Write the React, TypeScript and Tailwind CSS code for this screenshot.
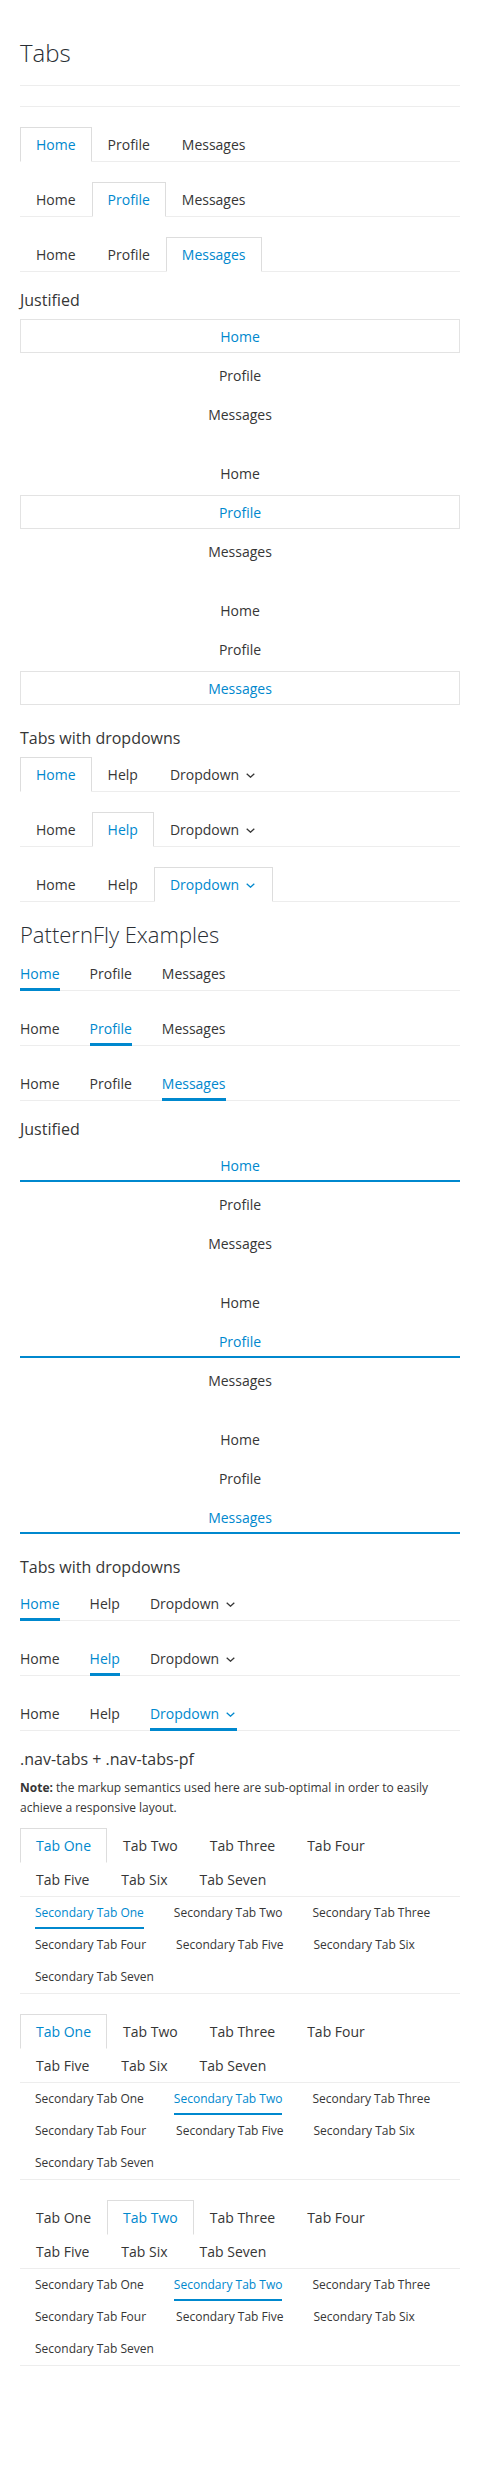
import React from 'react';

type TabItem = { label: string; dropdown?: boolean };

const basic: TabItem[] = [{ label: 'Home' }, { label: 'Profile' }, { label: 'Messages' }];
const withDropdown: TabItem[] = [{ label: 'Home' }, { label: 'Help' }, { label: 'Dropdown', dropdown: true }];
const primary = ['Tab One', 'Tab Two', 'Tab Three', 'Tab Four', 'Tab Five', 'Tab Six', 'Tab Seven'];
const secondary = [
  'Secondary Tab One',
  'Secondary Tab Two',
  'Secondary Tab Three',
  'Secondary Tab Four',
  'Secondary Tab Five',
  'Secondary Tab Six',
  'Secondary Tab Seven',
];

function Caret() {
  return (
    <svg width="11" height="5" viewBox="0 0 11 5" className="ml-[7px] mt-[1px]" fill="none">
      <polyline points="0.7,0.7 4.5,4.2 8.3,0.7" stroke="currentColor" strokeWidth="1.3" />
    </svg>
  );
}

function Label({ item }: { item: TabItem }) {
  return (
    <>
      {item.label}
      {item.dropdown && <Caret />}
    </>
  );
}

// bootstrap style tabs with a boxed active tab
function NavTabs({ items, active }: { items: TabItem[]; active: number }) {
  return (
    <ul className="flex border-b border-[#ededed] mb-[20px]">
      {items.map((item, i) => (
        <li key={item.label} className="-mb-px">
          <a
            className={
              'h-[35px] flex items-center px-[15px] border text-[14px] ' +
              (i === active
                ? 'border-[#dddddd] border-b-white bg-white text-[#0088ce]'
                : 'border-transparent text-[#363636]')
            }
          >
            <Label item={item} />
          </a>
        </li>
      ))}
    </ul>
  );
}

function NavTabsJustified({ items, active }: { items: TabItem[]; active: number }) {
  return (
    <ul className="flex flex-col mb-[20px]">
      {items.map((item, i) => (
        <li key={item.label}>
          <a
            className={
              'h-[34px] mb-[5px] flex items-center justify-center border text-[14px] ' +
              (i === active ? 'border-[#e3e3e3] text-[#0088ce]' : 'border-transparent text-[#363636]')
            }
          >
            {item.label}
          </a>
        </li>
      ))}
    </ul>
  );
}

// patternfly underline tabs
function PfTabs({ items, active }: { items: TabItem[]; active: number }) {
  return (
    <ul className="flex gap-[30px] border-b border-[#ededed] mb-[20px]">
      {items.map((item, i) => (
        <li key={item.label} className="-mb-px">
          <a
            className={
              'h-[35px] flex items-center text-[14px] ' +
              (i === active ? 'text-[#0088ce] shadow-[inset_0_-3px_0_#0088ce]' : 'text-[#363636]')
            }
          >
            <Label item={item} />
          </a>
        </li>
      ))}
    </ul>
  );
}

function PfTabsJustified({ items, active }: { items: TabItem[]; active: number }) {
  return (
    <ul className="flex flex-col mb-[20px]">
      {items.map((item, i) => (
        <li key={item.label}>
          <a
            className={
              'h-[34px] mb-[5px] flex items-center justify-center text-[14px] ' +
              (i === active ? 'text-[#0088ce] shadow-[inset_0_-2px_0_#0088ce]' : 'text-[#363636]')
            }
          >
            {item.label}
          </a>
        </li>
      ))}
    </ul>
  );
}

function TwoLevelTabs({ activePrimary, activeSecondary }: { activePrimary: number; activeSecondary: number }) {
  return (
    <div className="mb-[20px]">
      <ul className="flex flex-wrap border-b border-[#ededed]">
        {primary.map((label, i) => (
          <li key={label} className="-mb-px">
            <a
              className={
                'h-[35px] flex items-center px-[15px] border text-[14px] ' +
                (i === activePrimary
                  ? 'border-[#dddddd] border-b-white bg-white text-[#0088ce]'
                  : 'border-transparent text-[#363636]')
              }
            >
              {label}
            </a>
          </li>
        ))}
      </ul>
      <ul className="flex flex-wrap gap-x-[30px] px-[15px] border-b border-[#ededed]">
        {secondary.map((label, i) => (
          <li key={label}>
            <a
              className={
                'h-[32px] flex items-center text-[12px] ' +
                (i === activeSecondary ? 'text-[#0088ce] shadow-[inset_0_-2px_0_#0088ce]' : 'text-[#363636]')
              }
            >
              {label}
            </a>
          </li>
        ))}
      </ul>
    </div>
  );
}

function H3({ children }: { children: React.ReactNode }) {
  return <h3 className="text-[16px] leading-[17px] mb-[10px] text-[#363636]">{children}</h3>;
}

export default function App() {
  return (
    <div className="bg-white min-h-[2466px] px-[20px] text-[#363636] font-['Open_Sans','Liberation_Sans',sans-serif]">
      <div className="pt-[40px] pb-[19px] border-b border-[#ededed]">
        <h1 className="text-[24px] leading-[26px] font-light text-[#292e34]">Tabs</h1>
      </div>
      <hr className="mt-[20px] mb-[20px] border-[#ededed]" />

      <NavTabs items={basic} active={0} />
      <NavTabs items={basic} active={1} />
      <NavTabs items={basic} active={2} />

      <H3>Justified</H3>
      <NavTabsJustified items={basic} active={0} />
      <NavTabsJustified items={basic} active={1} />
      <NavTabsJustified items={basic} active={2} />

      <H3>Tabs with dropdowns</H3>
      <NavTabs items={withDropdown} active={0} />
      <NavTabs items={withDropdown} active={1} />
      <NavTabs items={withDropdown} active={2} />

      <h2 className="text-[22px] leading-[24px] font-light mb-[10px] text-[#292e34]">PatternFly Examples</h2>
      <PfTabs items={basic} active={0} />
      <PfTabs items={basic} active={1} />
      <PfTabs items={basic} active={2} />

      <H3>Justified</H3>
      <PfTabsJustified items={basic} active={0} />
      <PfTabsJustified items={basic} active={1} />
      <PfTabsJustified items={basic} active={2} />

      <H3>Tabs with dropdowns</H3>
      <PfTabs items={withDropdown} active={0} />
      <PfTabs items={withDropdown} active={1} />
      <PfTabs items={withDropdown} active={2} />

      <H3>.nav-tabs + .nav-tabs-pf</H3>
      <p className="text-[12px] leading-[20px] mb-[10px]">
        <strong className="font-bold">Note:</strong> the markup semantics used here are sub-optimal in order to easily
        achieve a responsive layout.
      </p>
      <TwoLevelTabs activePrimary={0} activeSecondary={0} />
      <TwoLevelTabs activePrimary={0} activeSecondary={1} />
      <TwoLevelTabs activePrimary={1} activeSecondary={1} />
    </div>
  );
}
